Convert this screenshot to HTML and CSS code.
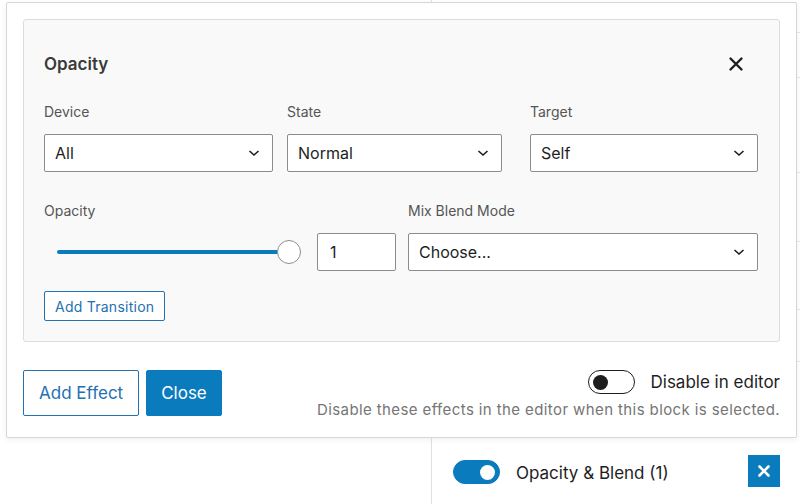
FILE: index.html
```html
<!DOCTYPE html>
<html lang="en">
<head>
    <meta charset="UTF-8">
    <meta name="viewport" content="width=device-width, initial-scale=1.0">
    <title>Block Effects</title>
    <link rel="stylesheet" href="styles.css">
</head>
<body>
    <div class="editor">
        <div class="canvas"></div>
        <aside class="sidebar">
            <div class="sidebar-row" style="height: 33px"></div>
            <div class="sidebar-row" style="height: 45px"></div>
            <div class="sidebar-row" style="height: 95px"></div>
            <div class="sidebar-row" style="height: 69px"></div>
            <div class="sidebar-row" style="height: 68px"></div>
            <div class="sidebar-row" style="height: 52px"></div>
            <div class="effect-row">
                <span class="toggle toggle-on"><span class="toggle-dot"></span></span>
                <span class="effect-name">Opacity &amp; Blend (1)</span>
                <button class="icon-button">
                    <svg width="16" height="16" viewBox="0 0 16 16"><path d="M3.5 3.5l9 9M12.5 3.5l-9 9" stroke="#fff" stroke-width="2.6" stroke-linecap="round"/></svg>
                </button>
            </div>
        </aside>
    </div>

    <div class="popover">
        <div class="effect-card">
            <div class="card-header">
                <h2>Opacity</h2>
                <svg class="close-icon" width="16" height="16" viewBox="0 0 16 16"><path d="M2.5 2.5l11 11M13.5 2.5l-11 11" stroke="#1e1e1e" stroke-width="2.4" stroke-linecap="round"/></svg>
            </div>

            <div class="field-row">
                <div class="field field-device">
                    <label>Device</label>
                    <div class="select"><span>All</span>
                        <svg width="12" height="8" viewBox="0 0 12 8"><path d="M1.5 2l4.5 4 4.5-4" fill="none" stroke="#1e1e1e" stroke-width="1.6"/></svg>
                    </div>
                </div>
                <div class="field field-state">
                    <label>State</label>
                    <div class="select"><span>Normal</span>
                        <svg width="12" height="8" viewBox="0 0 12 8"><path d="M1.5 2l4.5 4 4.5-4" fill="none" stroke="#1e1e1e" stroke-width="1.6"/></svg>
                    </div>
                </div>
                <div class="field field-target">
                    <label>Target</label>
                    <div class="select"><span>Self</span>
                        <svg width="12" height="8" viewBox="0 0 12 8"><path d="M1.5 2l4.5 4 4.5-4" fill="none" stroke="#1e1e1e" stroke-width="1.6"/></svg>
                    </div>
                </div>
            </div>

            <div class="field-row row-second">
                <div class="field field-opacity">
                    <label>Opacity</label>
                    <div class="range-control">
                        <div class="slider">
                            <div class="slider-track"></div>
                            <div class="slider-thumb"></div>
                        </div>
                        <div class="number-input">1</div>
                    </div>
                </div>
                <div class="field field-blend">
                    <label>Mix Blend Mode</label>
                    <div class="select"><span>Choose...</span>
                        <svg width="12" height="8" viewBox="0 0 12 8"><path d="M1.5 2l4.5 4 4.5-4" fill="none" stroke="#1e1e1e" stroke-width="1.6"/></svg>
                    </div>
                </div>
            </div>

            <button class="button-small">Add Transition</button>
        </div>

        <div class="popover-footer">
            <div class="footer-buttons">
                <button class="button-outline">Add Effect</button>
                <button class="button-primary">Close</button>
            </div>
            <div class="footer-option">
                <div class="option-line">
                    <span class="toggle"><span class="toggle-dot"></span></span>
                    <span class="option-label">Disable in editor</span>
                </div>
                <p class="help">Disable these effects in the editor when this block is selected.</p>
            </div>
        </div>
    </div>
</body>
</html>
```

FILE: styles.css
```css
body {
    font-family: Inter, 'Noto Sans', sans-serif;
    margin: 0;
    padding: 0;
    background-color: #fff;
    color: #1e1e1e;
    width: 800px;
    height: 504px;
    overflow: hidden;
    position: relative;
}
.editor {
    display: flex;
    height: 504px;
}
.canvas {
    width: 431px;
}
.sidebar {
    flex: 1;
    border-left: 1px solid #e0e0e0;
    display: flex;
    flex-direction: column;
}
.sidebar-row {
    border-bottom: 1px solid #e8e8e8;
    box-sizing: border-box;
}
.effect-row {
    margin-top: auto;
    height: 66px;
    display: flex;
    align-items: center;
    padding: 0 20px 0 21px;
}
.effect-name {
    margin-left: 16px;
    margin-top: 3px;
    font-size: 17px;
    color: #1e1e1e;
}
.icon-button {
    margin-left: auto;
    width: 32px;
    height: 32px;
    border: none;
    border-radius: 0;
    background-color: #0a7bbd;
    display: flex;
    align-items: center;
    justify-content: center;
    padding: 0;
}

/* toggles */
.toggle {
    width: 47px;
    height: 24px;
    box-sizing: border-box;
    border: 1.5px solid #1e1e1e;
    border-radius: 12px;
    background: #fff;
    display: flex;
    align-items: center;
    padding: 0 4px;
}
.toggle-dot {
    width: 15px;
    height: 15px;
    border-radius: 50%;
    background: #1e1e1e;
}
.toggle-on {
    margin-top: 2px;
    background: #0a7bbd;
    border-color: #0a7bbd;
    justify-content: flex-end;
}
.toggle-on .toggle-dot {
    background: #fff;
}

/* popover */
.popover {
    position: absolute;
    left: 6px;
    top: 2px;
    width: 791px;
    height: 436px;
    box-sizing: border-box;
    background: #fff;
    border: 1px solid #d6d6d6;
    border-radius: 2px;
    box-shadow: 0 2px 6px rgba(0, 0, 0, 0.06);
    padding: 16px;
}
.effect-card {
    background: #f9f9f9;
    border: 1px solid #dcdcdc;
    border-radius: 3px;
    padding: 20px;
    height: 323px;
    box-sizing: border-box;
}
.card-header {
    height: 48px;
    display: flex;
    align-items: center;
    justify-content: space-between;
    padding-right: 15px;
}
h2 {
    margin: 0;
    font-size: 17px;
    font-weight: 600;
    color: #3a3a3a;
}
.field-row {
    display: flex;
    margin-top: 14px;
}
.row-second {
    margin-top: 29px;
}
.field label {
    display: block;
    height: 20px;
    line-height: 20px;
    font-size: 14px;
    color: #555;
    margin-bottom: 12px;
}
.field-device { width: 229px; }
.field-state { width: 215px; margin-left: 14px; }
.field-target { width: 228px; margin-left: 28px; }
.field-opacity { width: 352px; }
.field-blend { width: 350px; margin-left: 12px; }
.select {
    height: 38px;
    box-sizing: border-box;
    background: #fff;
    border: 1px solid #8c8c8c;
    border-radius: 2px;
    display: flex;
    align-items: center;
    justify-content: space-between;
    padding: 0 12px 0 10px;
    font-size: 16px;
    color: #1e1e1e;
}
.range-control {
    display: flex;
    align-items: center;
    height: 38px;
}
.slider {
    width: 261px;
    height: 38px;
    position: relative;
}
.slider-track {
    position: absolute;
    left: 13px;
    top: 17px;
    width: 234px;
    height: 4px;
    border-radius: 2px;
    background: #0a7bbd;
}
.slider-thumb {
    position: absolute;
    left: 233px;
    top: 7px;
    width: 24px;
    height: 24px;
    box-sizing: border-box;
    border-radius: 50%;
    background: #fff;
    border: 1px solid #8c8f94;
}
.number-input {
    margin-left: 12px;
    width: 79px;
    height: 38px;
    box-sizing: border-box;
    background: #fff;
    border: 1px solid #8c8c8c;
    border-radius: 2px;
    display: flex;
    align-items: center;
    padding-left: 12px;
    font-size: 16px;
}
button {
    font-family: inherit;
    cursor: pointer;
}
.button-small {
    margin-top: 20px;
    height: 30px;
    padding: 0 10px;
    background: #fff;
    border: 1px solid #2271b1;
    border-radius: 2px;
    color: #2271b1;
    font-size: 14px;
    letter-spacing: 0.25px;
}
.popover-footer {
    display: flex;
    justify-content: space-between;
    margin-top: 28px;
}
.footer-buttons {
    display: flex;
    gap: 7px;
}
.button-outline,
.button-primary {
    height: 46px;
    border-radius: 2px;
    font-size: 17px;
    padding: 0 15px;
}
.button-outline {
    background: #fff;
    border: 1px solid #2271b1;
    color: #2271b1;
}
.button-primary {
    padding: 0 14px;
    background: #0a7bbd;
    border: 1px solid #0a7bbd;
    color: #fff;
}
.footer-option {
    display: flex;
    flex-direction: column;
    align-items: flex-end;
}
.option-line {
    display: flex;
    align-items: center;
    height: 24px;
}
.option-label {
    margin-left: 16px;
    font-size: 17px;
    color: #1e1e1e;
}
.help {
    margin: 6px 0 0;
    font-size: 15px;
    letter-spacing: 0.4px;
    color: #757575;
}
```
